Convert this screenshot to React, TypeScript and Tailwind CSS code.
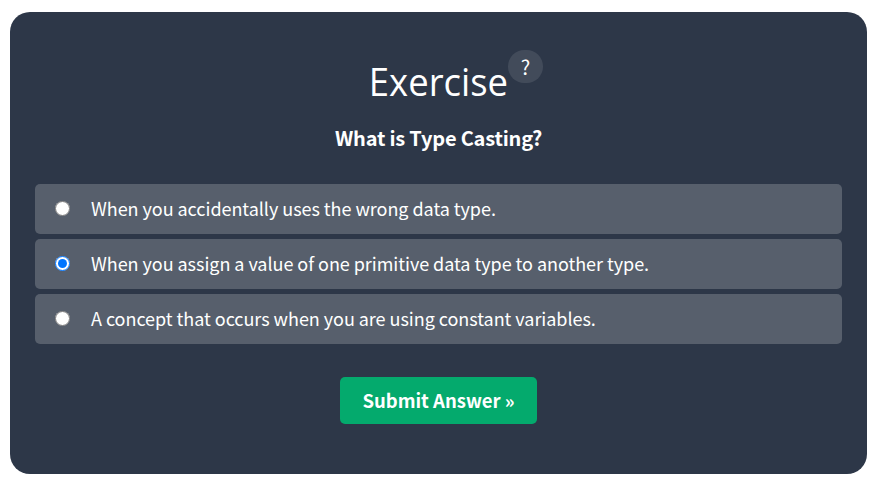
import { useState } from "react";

const options = [
  "When you accidentally uses the wrong data type.",
  "When you assign a value of one primitive data type to another type.",
  "A concept that occurs when you are using constant variables.",
];

export default function App() {
  const [selected, setSelected] = useState(1);

  return (
    <main className="h-[477px] bg-white pt-3 pl-[10px] font-['Noto_Sans_CJK_SC',sans-serif] text-white">
      <section className="relative flex h-[462px] w-[857px] flex-col items-center rounded-[20px] bg-[#2d3748] px-[25px] pt-[38px]">
        <h2 className="mt-[6px] scale-x-[0.935] font-['Open_Sans','Noto_Sans',sans-serif] text-[39px] leading-[50px] font-normal">
          Exercise
        </h2>
        <button className="absolute top-[38px] left-[498px] flex h-[33px] w-[35px] items-center justify-center rounded-full bg-white/10 text-[20px] leading-none">
          ?
        </button>
        <p className="mt-[17px] text-[20px] leading-[30px] font-bold tracking-[-0.21px] whitespace-nowrap">
          What is Type Casting?
        </p>
        <div className="mt-[31px] flex w-full flex-col gap-[5px]">
          {options.map((label, i) => (
            <label
              key={label}
              className="flex h-[50px] items-center rounded-[5px] bg-white/20 pl-5"
            >
              <input
                type="radio"
                name="answer"
                className="mb-[2px] h-[15px] w-[15px] shrink-0"
                checked={selected === i}
                onChange={() => setSelected(i)}
              />
              <span className="mb-[2px] ml-[21px] text-[18px] leading-[30px] tracking-[-0.04px] whitespace-nowrap">
                {label}
              </span>
            </label>
          ))}
        </div>
        <button className="mt-[33px] flex h-[47px] w-[197px] items-center justify-center rounded-[5px] bg-[#04aa6d] text-[18.5px] font-bold whitespace-nowrap">
          Submit Answer »
        </button>
      </section>
    </main>
  );
}
